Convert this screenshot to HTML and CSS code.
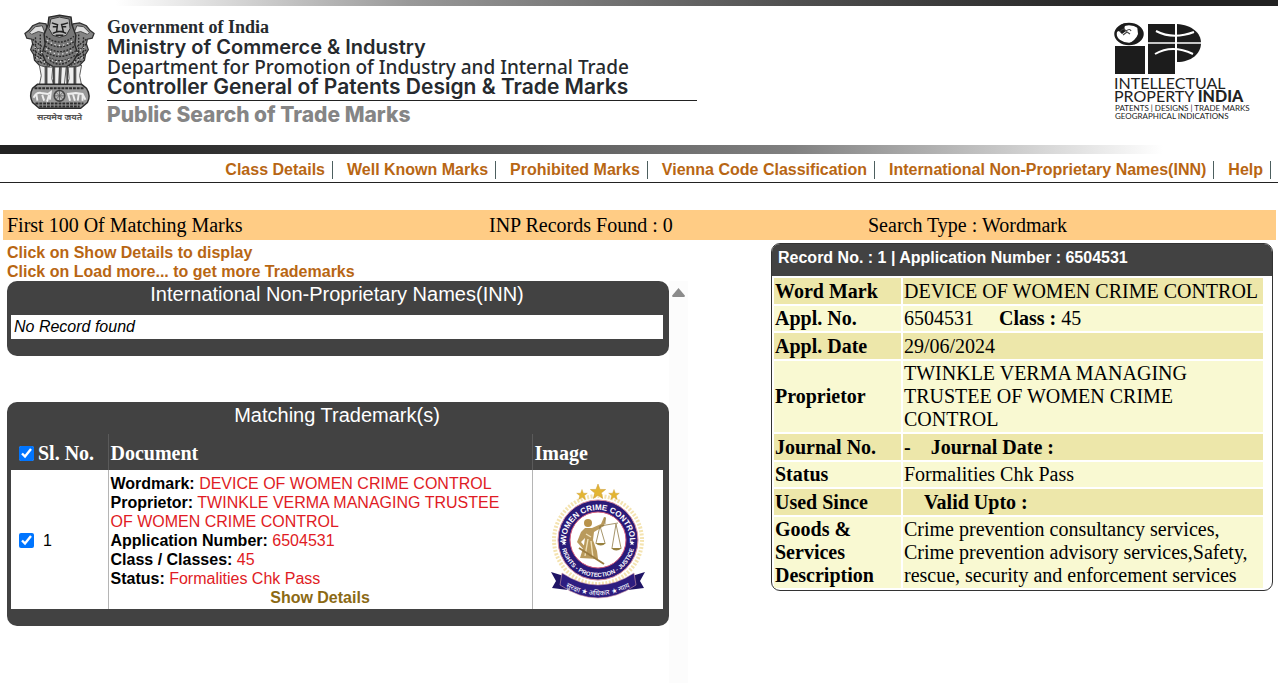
FILE: index.html
```html
<!DOCTYPE html>
<html lang="en">

<head>
    <meta charset="UTF-8">
    <meta name="viewport" content="width=device-width, initial-scale=1.0">
    <title>Public Search of Trade Marks</title>
    <link rel="stylesheet" href="styles.css">
</head>

<body>
    <header class="banner">
        <div class="top-strip"></div>
        <div class="banner-content">
            <svg class="emblem" viewBox="0 0 76 112" role="img" aria-label="Emblem of India">
                <!-- side lions -->
                <g fill="#858585" stroke="#303030" stroke-width="1.3">
                    <path d="M24 10 L17 9 L10 12 L6 17 L2 20 L4 25 L9 26 L10 31 L8 37 L11 42 L12 48 L18 54 L27 55 L31 40 Z" />
                    <path d="M52 10 L59 9 L66 12 L70 17 L74 20 L72 25 L67 26 L66 31 L68 37 L65 42 L64 48 L58 54 L49 55 L45 40 Z" />
                </g>
                <g fill="#dedede" stroke="#444" stroke-width="1">
                    <path d="M13 13 L20 12 L23 20 L16 18 L9 21 L7 19 Z" />
                    <path d="M63 13 L56 12 L53 20 L60 18 L67 21 L69 19 Z" />
                </g>
                <!-- centre lion -->
                <path d="M27 3 L38 1 L50 3 L51 11 L55 22 L54 32 L57 41 L52 50 L45 55 L32 55 L24 50 L20 41 L23 31 L22 21 L26 11 Z" fill="#777" stroke="#2a2a2a" stroke-width="1.5" />
                <path d="M29 5 L38 3 L48 5 L49 15 L45 22 L38 24 L31 22 L27 15 Z" fill="#bbb" stroke="#333" />
                <path d="M30 9 l6 2 M40 11 l7 -2 M31 13 h4 M41 13 h4 M36 10 l-1 8 h7 l-2 -8 M31 20 q7 -4 14 0 M34 22 h8" fill="none" stroke="#222" stroke-width="1.5" />
                <!-- manes -->
                <g fill="none" stroke="#292929" stroke-width="1.4" stroke-dasharray="2 1.4">
                    <path d="M24 23 q14 12 29 0 M23 28 q15 12 31 0 M23 33 q15 12 31 0 M22 38 q16 12 33 0 M24 43 q14 11 30 0 M28 48 q10 8 21 0" />
                    <path d="M10 26 l10 8 M10 31 l10 9 M10 37 l12 8 M12 42 l12 8 M15 49 l11 4 M66 26 l-10 8 M66 31 l-10 9 M66 37 l-12 8 M64 42 l-12 8 M61 49 l-11 4" />
                    <path d="M13 24 v24 M18 21 v30 M58 21 v30 M63 24 v24" />
                </g>
                <g fill="none" stroke="#e5e5e5" stroke-width="1.2" stroke-dasharray="1.5 3">
                    <path d="M25 27 q13 11 27 0 M24 36 q14 11 29 0 M26 45 q12 9 25 0 M12 34 l9 7 M64 34 l-9 7 M14 45 l9 5 M62 45 l-9 5" />
                </g>
                <!-- legs -->
                <g fill="#efefef" stroke="#555" stroke-width="1">
                    <path d="M17 53 L23 55 L23 73 L17 74 L19 64 Z" />
                    <path d="M25 55 L31 55 L30 67 L32 74 L25 74 Z" />
                    <path d="M33 55 L38 55 L37 74 L33 74 Z" />
                    <path d="M40 55 L45 55 L43 74 L39 74 Z" />
                    <path d="M47 55 L53 55 L53 74 L46 74 L48 67 Z" />
                    <path d="M55 55 L61 53 L59 64 L61 74 L55 73 Z" />
                </g>
                <path d="M24 54 v19 M32 54 v20 M38.5 54 v20 M46 54 v20 M54 54 v19" fill="none" stroke="#444" stroke-width="1.8" />
                <!-- abacus with the wheel -->
                <path d="M15 73 h46 l5 4 q5 8 1 15 l-7 6 H17 l-7 -6 q-4 -7 0 -15 Z" fill="#999" stroke="#2c2c2c" stroke-width="1.5" />
                <path d="M12 77 h52 M13 93 h50 M17 96 h42" stroke="#2d2d2d" stroke-width="2" stroke-dasharray="3 1" />
                <circle cx="38" cy="85" r="5.5" fill="#bbb" stroke="#444" stroke-width="1.6" />
                <path d="M38 80 v10 M33 85 h10 M34.5 81.5 l7 7 M41.5 81.5 l-7 7" stroke="#555" stroke-width="0.8" />
                <path d="M11 87 q3 -6 8 -5 l7 1 l3 -2 l-1 8 M14 84 l1 6 M20 84 l2 6 M27 84 l-2 7 M49 90 l-2 -7 l8 -1 l7 1 l3 6 M52 83 l2 7 M58 83 l-1 7 M62 84 v6" fill="none" stroke="#ededed" stroke-width="2" />
                <text x="38" y="110" text-anchor="middle" class="emblem-motto">सत्यमेव जयते</text>
            </svg>

            <div class="departments">
                <div class="gov-line">Government of India</div>
                <div class="ministry-line">Ministry of Commerce &amp; Industry</div>
                <div class="promotion-line">Department for Promotion of Industry and Internal Trade</div>
                <div class="controller-line">Controller General of Patents Design &amp; Trade Marks</div>
                <h1>Public Search of Trade Marks</h1>
            </div>

            <svg class="ip-logo" viewBox="0 0 146 102" role="img" aria-label="Intellectual Property India">
                <ellipse cx="15" cy="12" rx="13.5" ry="10" fill="#fff" stroke="#1c1c1c" stroke-width="2.5" />
                <path d="M2 10 Q5 1 14 1 Q8 5 12 9 L8 12 L5 9 Z M23 3 Q30 8 28 15 Q24 22 14 22 Q22 18 24 12 Z" fill="#1c1c1c" />
                <path d="M6 10 q3 -5 6 -1 q4 -3 5 0 M9 13 l4 -3 l3 2" fill="none" stroke="#444" stroke-width="1.2" />
                <rect x="1" y="24" width="30" height="28" fill="#1c1c1c" />
                <rect x="34" y="2" width="27" height="50" fill="#1c1c1c" />
                <path d="M63 2 C78 3 87 11 87 21 C87 32 77 40 63 40 Z" fill="#1c1c1c" />
                <path d="M34 21 H87" stroke="#fff" stroke-width="1.5" />
                <path d="M42 9 Q59 18 80 10 M41 32 Q58 22 79 32" fill="none" stroke="#fff" stroke-width="2" />
                <text x="0" y="67" class="ip-name">INTELLECTUAL</text>
                <text x="0" y="80" class="ip-name">PROPERTY <tspan class="ip-india">INDIA</tspan></text>
                <text x="1" y="89" class="ip-small">PATENTS | DESIGNS | TRADE MARKS</text>
                <text x="1" y="97" class="ip-small">GEOGRAPHICAL INDICATIONS</text>
            </svg>
        </div>
        <div class="bottom-strip"></div>
    </header>

    <nav class="menu">
        <a href="#">Class Details</a>
        <a href="#">Well Known Marks</a>
        <a href="#">Prohibited Marks</a>
        <a href="#">Vienna Code Classification</a>
        <a href="#">International Non-Proprietary Names(INN)</a>
        <a href="#">Help</a>
    </nav>

    <div class="search-info">
        <span>First 100 Of Matching Marks</span>
        <span>INP Records Found : 0</span>
        <span>Search Type : Wordmark</span>
    </div>

    <main class="content">
        <section class="results">
            <p class="hint">Click on Show Details to display<br>Click on Load more... to get more Trademarks</p>
            <div class="scroll-area">
                <div class="panels">
                    <div class="panel">
                        <h2>International Non-Proprietary Names(INN)</h2>
                        <div class="no-record">No Record found</div>
                    </div>

                    <div class="panel">
                        <h2>Matching Trademark(s)</h2>
                        <table class="marks">
                            <thead>
                                <tr>
                                    <th class="col-no"><label><input type="checkbox" checked>Sl. No.</label></th>
                                    <th>Document</th>
                                    <th class="col-image">Image</th>
                                </tr>
                            </thead>
                            <tbody>
                                <tr>
                                    <td class="col-no"><label><input type="checkbox" checked><span class="serial">1</span></label></td>
                                    <td class="doc">
                                        <b>Wordmark:</b> <span>DEVICE OF WOMEN CRIME CONTROL</span><br>
                                        <b>Proprietor:</b> <span>TWINKLE VERMA MANAGING TRUSTEE OF WOMEN CRIME CONTROL</span><br>
                                        <b>Application Number:</b> <span>6504531</span><br>
                                        <b>Class / Classes:</b> <span>45</span><br>
                                        <b>Status:</b> <span>Formalities Chk Pass</span>
                                        <a class="show-details" href="#">Show Details</a>
                                    </td>
                                    <td class="col-image">
                                        <svg class="mark-image" viewBox="0 0 100 124" role="img" aria-label="Women Crime Control">
                                            <defs>
                                                <path id="arcTop" d="M18 63 A32 32 0 0 1 82 63" />
                                                <path id="arcBottom" d="M13 61 A37 37 0 0 0 87 61" />
                                                <path id="arcRibbon" d="M13 105 Q50 128 87 105" />
                                                <path id="star" d="M0 -8 L2 -2.6 L7.6 -2.5 L3.2 1 L4.7 6.5 L0 3.3 L-4.7 6.5 L-3.2 1 L-7.6 -2.5 L-2 -2.6 Z" />
                                            </defs>
                                            <circle cx="50" cy="61" r="44" fill="none" stroke="#f4e3b0" stroke-width="4" stroke-dasharray="2 1.5" />
                                            <circle cx="50" cy="61" r="40" fill="#2a1a78" stroke="#d88f9c" stroke-width="1" />
                                            <circle cx="50" cy="61" r="28" fill="#fff" stroke="#d45a78" stroke-width="1" />
                                            <g fill="#e3b532" stroke="#c8962a" stroke-width="0.5">
                                                <use href="#star" transform="translate(50 13)" />
                                                <use href="#star" transform="translate(34 16) scale(0.7)" />
                                                <use href="#star" transform="translate(66 16) scale(0.7)" />
                                            </g>
                                            <text class="ring-text" text-anchor="middle"><textPath href="#arcTop" startOffset="50%">WOMEN CRIME CONTROL</textPath></text>
                                            <text class="ring-small" text-anchor="middle"><textPath href="#arcBottom" startOffset="50%">RIGHTS - PROTECTION - JUSTICE</textPath></text>
                                            <g fill="#fff">
                                                <use href="#star" transform="translate(16 64) scale(0.35)" />
                                                <use href="#star" transform="translate(84 64) scale(0.35)" />
                                            </g>
                                            <!-- lady justice -->
                                            <circle cx="40" cy="44" r="4" fill="#b8924a" />
                                            <path d="M37 49 L44 49 L53 45 L56 38 L58 39 L56 47 L46 53 L45 61 L49 72 L50 80 L32 79 L36 66 L37 59 L33 63 L38 69 L36 71 L29 63 L33 53 Z" fill="#b99a5c" />
                                            <path d="M38 55 L43 58 M40 60 L37 77 M43 62 L45 79" stroke="#efe0b8" stroke-width="1.4" />
                                            <path d="M31 69 L56 85" stroke="#9a7b3f" stroke-width="2" />
                                            <g fill="none" stroke="#8f7a45" stroke-width="0.8">
                                                <path d="M57 38 V45 M52 47 L70 44 M52 47 L48 64 M52 47 L57 64 M68 45 L64 69 M68 45 L73 69" />
                                            </g>
                                            <path d="M47 64 H58 Q53 69 47 64 M63 69 H74 Q68 74 63 69" fill="#97813f" />
                                            <!-- ribbon -->
                                            <path d="M3 93 L16 97 L20 111 L4 109 L8 102 Z M97 93 L84 97 L80 111 L96 109 L92 102 Z" fill="#1f1465" />
                                            <path d="M14 94 Q50 118 86 94 L88 106 Q50 132 12 106 Z" fill="#2d1d80" stroke="#d9a0aa" stroke-width="0.6" />
                                            <text class="ribbon-text" text-anchor="middle"><textPath href="#arcRibbon" startOffset="50%">सुरक्षा ★ अधिकार ★ न्याय</textPath></text>
                                        </svg>
                                    </td>
                                </tr>
                            </tbody>
                        </table>
                    </div>
                </div>
                <div class="scroll-track"><span class="scroll-arrow"></span></div>
            </div>
        </section>

        <section class="record">
            <h3>Record No. : 1 | Application Number : 6504531</h3>
            <table class="details">
                <tr>
                    <th>Word Mark</th>
                    <td>DEVICE OF WOMEN CRIME CONTROL</td>
                </tr>
                <tr>
                    <th>Appl. No.</th>
                    <td>6504531 <b class="second">Class :</b> 45</td>
                </tr>
                <tr>
                    <th>Appl. Date</th>
                    <td>29/06/2024</td>
                </tr>
                <tr>
                    <th>Proprietor</th>
                    <td>TWINKLE VERMA MANAGING TRUSTEE OF WOMEN CRIME CONTROL</td>
                </tr>
                <tr>
                    <th>Journal No.</th>
                    <td><b>-</b> <b class="second short">Journal Date :</b></td>
                </tr>
                <tr>
                    <th>Status</th>
                    <td>Formalities Chk Pass</td>
                </tr>
                <tr>
                    <th>Used Since</th>
                    <td><b class="second">Valid Upto :</b></td>
                </tr>
                <tr>
                    <th>Goods &amp; Services Description</th>
                    <td>Crime prevention consultancy services, Crime prevention advisory services,Safety, rescue, security and enforcement services</td>
                </tr>
            </table>
        </section>
    </main>
</body>

</html>
```
FILE: styles.css
```css
* {
    box-sizing: border-box;
}

body {
    display: flex;
    flex-direction: column;
    min-height: 100vh;
    margin: 0;
    background-color: #fff;
    color: #000;
    font-family: "Liberation Serif", "Times New Roman", serif;
    font-size: 20px;
}

a {
    color: #b86613;
    text-decoration: none;
}

/* banner */
.top-strip {
    height: 6px;
    background: linear-gradient(to right, #fff 9%, #999 32%, #505050 62%, #222 88%);
}

.banner-content {
    display: flex;
    align-items: flex-start;
    height: 139px;
    padding: 8px 18px 0 23px;
}

.emblem {
    width: 73px;
    height: 108px;
}

.emblem-motto {
    font-family: "Noto Sans", sans-serif;
    font-size: 9px;
    font-weight: bold;
    fill: #555;
}

.departments {
    margin-left: 11px;
    padding-top: 3px;
    color: #262a2e;
    line-height: 20px;
    white-space: nowrap;
}

.gov-line {
    font-size: 18px;
    font-weight: bold;
}

.ministry-line,
.controller-line {
    font-family: Inter, "Liberation Sans", sans-serif;
    font-size: 20px;
    font-weight: 600;
}

.promotion-line {
    font-family: "Noto Sans", sans-serif;
    font-size: 19px;
    font-weight: 500;
}

.controller-line {
    font-size: 21px;
}

.departments h1 {
    width: 590px;
    margin: 3px 0 0;
    padding-top: 4px;
    border-top: 1px solid #222;
    color: #858585;
    font-family: Inter, "Liberation Sans", sans-serif;
    font-size: 21px;
    font-weight: 800;
    line-height: 20px;
}

.ip-logo {
    width: 146px;
    height: 102px;
    margin-top: 8px;
    margin-left: auto;
}

.ip-name {
    font-family: Lato, sans-serif;
    font-size: 16px;
    fill: #222;
}

.ip-india {
    font-weight: 900;
}

.ip-small {
    font-family: Lato, sans-serif;
    font-size: 8px;
    fill: #222;
}

.bottom-strip {
    height: 9px;
    background: linear-gradient(to right, #222 8%, #505050 35%, #808080 62%, #fff 91%);
}

/* menu */
.menu {
    display: flex;
    justify-content: flex-end;
    height: 29px;
    padding: 7px 7px 0 0;
    border-bottom: 1px solid #222;
}

.menu a {
    height: 18px;
    margin-left: 14px;
    padding-right: 7px;
    border-right: 1px solid #4d5f5f;
    font-family: "Liberation Sans", Arial, sans-serif;
    font-size: 16px;
    font-weight: bold;
    line-height: 18px;
    white-space: nowrap;
}

.search-info {
    display: grid;
    grid-template-columns: 482fr 379fr 408fr;
    margin: 27px 2px 0 3px;
    padding-left: 4px;
    background-color: #ffcc85;
    line-height: 30px;
}

.content {
    display: grid;
    flex: 1;
    grid-template-columns: 681fr 502fr;
    column-gap: 83px;
    padding: 3px 5px 0 7px;
}

/* left side */
.results {
    display: flex;
    flex-direction: column;
}

.hint {
    margin: 0;
    color: #b86613;
    font-family: "Liberation Sans", Arial, sans-serif;
    font-size: 16px;
    font-weight: bold;
    line-height: 19px;
}

.scroll-area {
    display: flex;
    flex: 1;
}

.panels {
    flex: 1;
}

.panel {
    margin-bottom: 46px;
    padding: 0 6px 17px 4px;
    border-radius: 10px;
    background-color: #424242;
}

.panel h2 {
    margin: 0;
    padding-bottom: 6px;
    color: #fff;
    font-family: "Liberation Sans", Arial, sans-serif;
    font-size: 20px;
    font-weight: normal;
    line-height: 26px;
    text-align: center;
}

.no-record {
    margin-top: 2px;
    padding-left: 3px;
    background-color: #fff;
    font-family: "Liberation Sans", Arial, sans-serif;
    font-size: 16px;
    font-style: italic;
    line-height: 24px;
}

.panel:last-child {
    margin-bottom: 0;
}

.marks {
    width: 100%;
    border-collapse: collapse;
    table-layout: fixed;
}

.marks th {
    height: 36px;
    padding: 2px 2px 0;
    border-left: 1px solid #5a5a5a;
    color: #fff;
    font-size: 20px;
    text-align: left;
}

.marks td {
    padding: 4px 2px 2px;
    border-left: 1px solid #b5b5b5;
    background-color: #fff;
    font-family: "Liberation Sans", Arial, sans-serif;
    font-size: 16px;
    line-height: 19px;
}

.marks th:first-child,
.marks td:first-child {
    border-left: none;
}

.marks .col-no {
    width: 97px;
    padding-left: 8px;
    padding-right: 0;
}

.marks .col-image {
    width: 131px;
}

.marks label {
    display: flex;
    align-items: center;
}

.marks input {
    width: 15px;
    height: 15px;
    margin: 0 4px 0 0;
}

.serial {
    margin-left: 5px;
}

.marks .doc {
    padding-right: 20px;
}

.doc span {
    color: #e01b24;
}

.show-details {
    display: block;
    padding-left: 18px;
    color: #8b6914;
    font-weight: bold;
    text-align: center;
}

.mark-image {
    display: block;
    width: 100px;
    height: 124px;
    margin-left: 13px;
}

.ring-text {
    font-size: 8px;
    font-weight: bold;
    fill: #fff;
}

.ring-small {
    font-size: 6px;
    font-weight: bold;
    fill: #fff;
}

.ribbon-text {
    font-family: "Noto Sans", sans-serif;
    font-size: 7px;
    fill: #fff;
}

.scroll-track {
    width: 19px;
    padding: 7px 0 0 3px;
    background-color: #fcfcfc;
}

.scroll-arrow {
    display: block;
    width: 13px;
    height: 9px;
    background-color: #8b8b8b;
    clip-path: polygon(50% 0, 100% 85%, 95% 100%, 5% 100%, 0 85%);
}

/* right side */
.record {
    align-self: start;
    overflow: hidden;
    border: 1px solid #333;
    border-radius: 9px;
}

.record h3 {
    height: 32px;
    margin: 0;
    padding-left: 6px;
    background-color: #424242;
    color: #fff;
    font-family: "Liberation Sans", Arial, sans-serif;
    font-size: 16px;
    line-height: 28px;
}

.details {
    width: calc(100% - 7px);
    border-spacing: 2px;
    table-layout: fixed;
}

.details th,
.details td {
    padding: 1px;
    background-color: #f9f9d2;
    line-height: 23px;
    text-align: left;
}

.details th {
    width: 127px;
}

.details tr:nth-child(odd) th,
.details tr:nth-child(odd) td {
    height: 26px;
    background-color: #ede7aa;
}

.second {
    margin-left: 20px;
}

.second.short {
    margin-left: 15px;
}
```
